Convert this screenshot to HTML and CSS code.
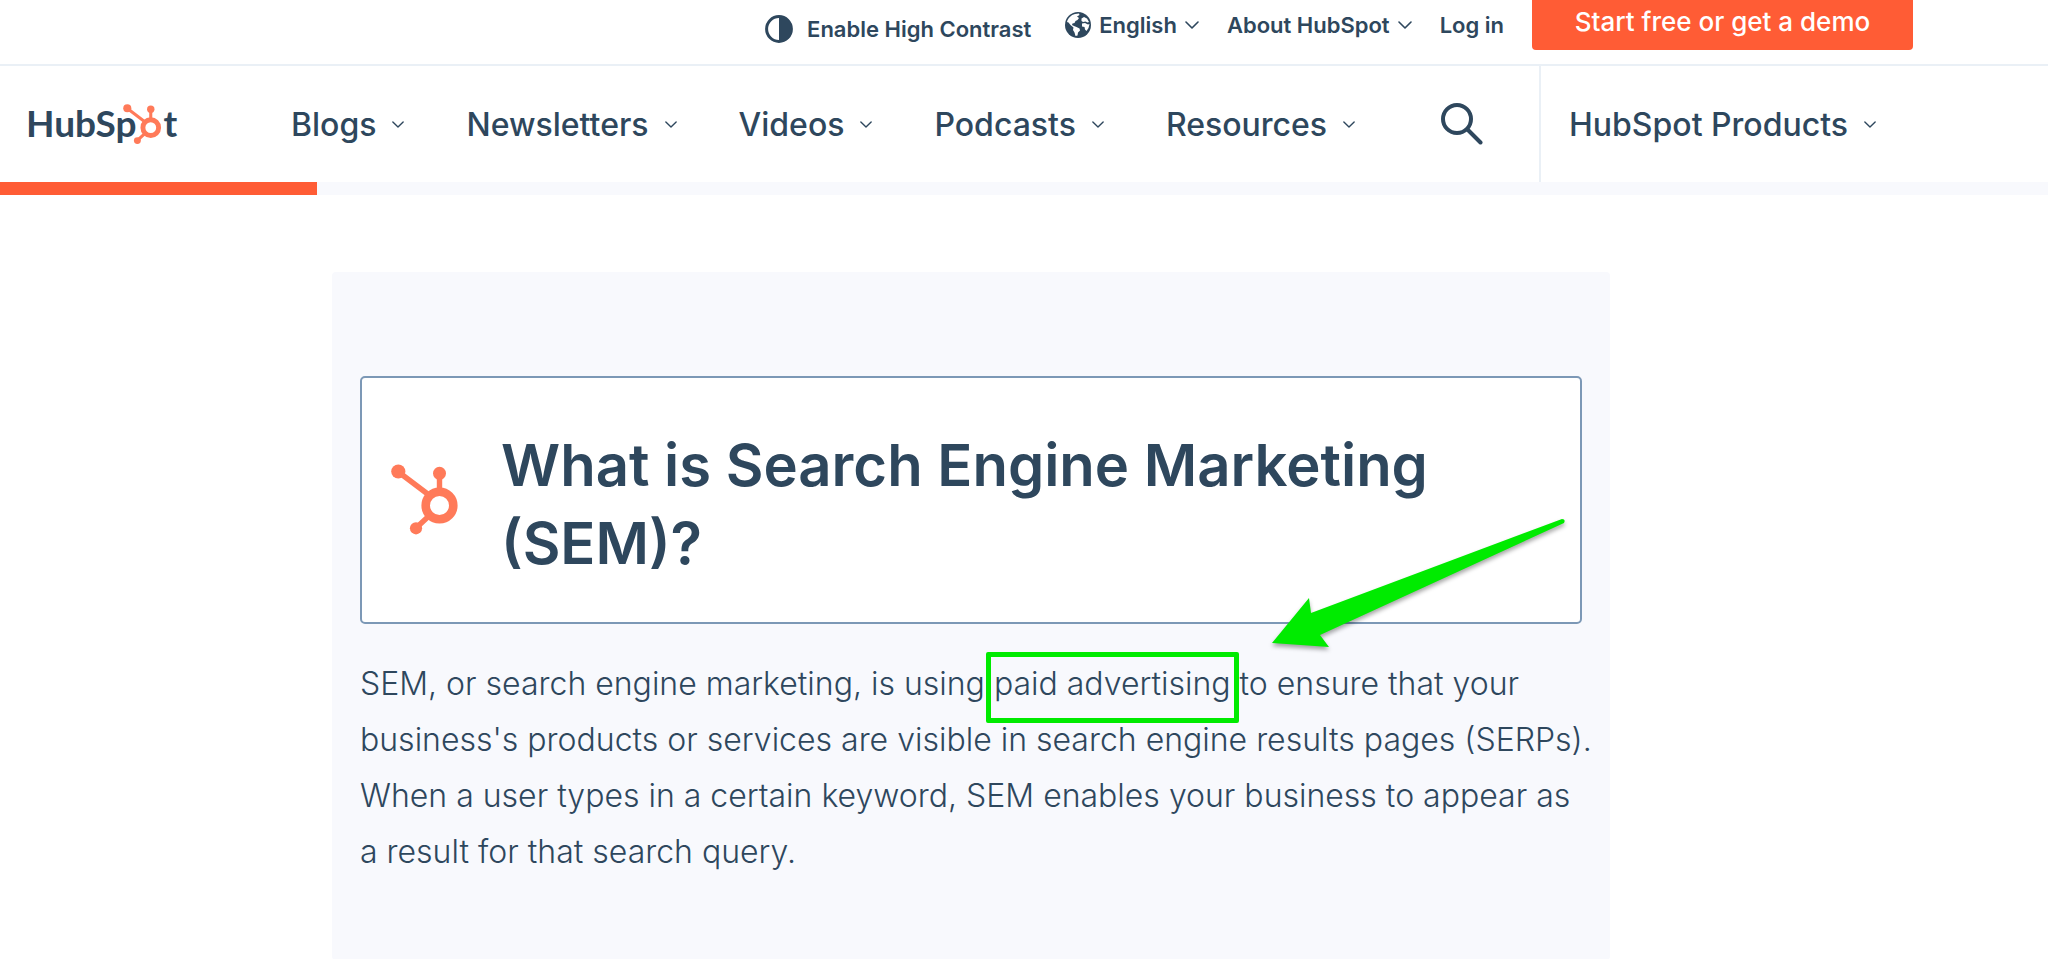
FILE: index.html
```html
<!DOCTYPE html>
<html lang="en">
<head>
<meta charset="utf-8">
<meta name="viewport" content="width=device-width, initial-scale=1">
<title>What is Search Engine Marketing (SEM)?</title>
<link rel="stylesheet" href="styles.css">
</head>
<body>
<svg class="defs" aria-hidden="true">
  <symbol id="sprocket" viewBox="0 0 68 72">
    <g fill="none" stroke="currentColor">
      <circle cx="48.5" cy="41.5" r="13.8" stroke-width="8.6"/>
      <path d="M7.5 8 38 31M48.5 9v20M25 64l14-13" stroke-width="5.4"/>
    </g>
    <g fill="currentColor"><circle cx="7.3" cy="7.5" r="7.1"/><circle cx="48.5" cy="9.3" r="6.5"/><circle cx="25" cy="64.3" r="6.1"/></g>
  </symbol>
  <symbol id="chevron" viewBox="0 0 14 8">
    <path d="M1 1l6 6 6-6" fill="none" stroke="currentColor" stroke-width="1.6" stroke-linecap="round" stroke-linejoin="round"/>
  </symbol>
</svg>

<header class="header">
  <div class="topbar">
    <button class="contrast" type="button">
      <svg class="contrast-icon" viewBox="0 0 28 28" aria-hidden="true"><circle cx="14" cy="14" r="12.4" fill="none" stroke="currentColor" stroke-width="3"/><path d="M14 1a13 13 0 0 1 0 26z" fill="currentColor"/></svg>
      Enable High Contrast
    </button>
    <button class="toplink language" type="button">
      <svg class="globe" viewBox="0 0 26 26" aria-hidden="true"><circle cx="13" cy="13" r="13" fill="currentColor"/><path fill="#fff" d="M2 10C3 6 6 3 10 2L14 1.500 14.500 3 12 4.500 14 6 12.500 8 10.500 9 9.500 11 7.500 11.500 7 13 9 14 11.500 15 14.500 16.500 15 18.500 13 20.500 12.500 23.500 10.500 24 9.500 20.500 8 18 8.500 15.500 5.500 13 3.500 10.500zM16.500 6.500 19 5 22 6.500 24 10 22.500 10.500 20.500 9.500 18 10 16.500 9zM17 11.500 20 11 23 12.500 24.500 12 23.500 16 21.500 19 20 17.500 19.500 15 17 14.500z"/></svg>
      English
      <svg class="chevron" aria-hidden="true"><use href="#chevron"/></svg>
    </button>
    <button class="toplink" type="button">About HubSpot
      <svg class="chevron" aria-hidden="true"><use href="#chevron"/></svg>
    </button>
    <a class="toplink" href="#login">Log in</a>
    <a class="cta" href="#start">Start free or get a demo</a>
  </div>

  <div class="mainbar">
    <a class="logo" href="#home" aria-label="HubSpot"><span>HubSp</span><svg class="logo-mark" aria-hidden="true"><use href="#sprocket"/></svg><span>t</span></a>
    <nav class="nav" aria-label="Main">
      <button class="navlink" type="button">Blogs<svg class="chevron" aria-hidden="true"><use href="#chevron"/></svg></button>
      <button class="navlink" type="button">Newsletters<svg class="chevron" aria-hidden="true"><use href="#chevron"/></svg></button>
      <button class="navlink" type="button">Videos<svg class="chevron" aria-hidden="true"><use href="#chevron"/></svg></button>
      <button class="navlink" type="button">Podcasts<svg class="chevron" aria-hidden="true"><use href="#chevron"/></svg></button>
      <button class="navlink" type="button">Resources<svg class="chevron" aria-hidden="true"><use href="#chevron"/></svg></button>
    </nav>
    <button class="search" type="button" aria-label="Search">
      <svg viewBox="0 0 42 42" aria-hidden="true"><g fill="none" stroke="currentColor" stroke-width="4" stroke-linecap="round"><circle cx="16" cy="16" r="14"/><path d="M26.500 26.500 39.500 39.500"/></g></svg>
    </button>
    <div class="products">
      <button class="navlink" type="button">HubSpot Products<svg class="chevron" aria-hidden="true"><use href="#chevron"/></svg></button>
    </div>
  </div>
  <div class="progress"><div class="progress-fill" style="width:15.5%"></div></div>
</header>

<main class="page">
  <article class="panel">
    <div class="card">
      <svg class="card-mark" aria-hidden="true"><use href="#sprocket"/></svg>
      <h1 class="title">What is Search Engine Marketing (SEM)?</h1>
    </div>
    <p class="answer">SEM, or search engine marketing, is using <mark class="highlight">paid advertising</mark> to ensure that your business's products or services are visible in search engine results pages (SERPs). When a user types in a certain keyword, SEM enables your business to appear as a&nbsp;result for that search query.</p>
    <svg class="arrow" viewBox="0 0 300 134" aria-hidden="true"><path fill="#00eb00" d="M3 126 40 81 42 96L293 2Q297 2 295 6L51 118 60 130z"/></svg>
  </article>
</main>
</body>
</html>
```
FILE: styles.css
```css
:root {
  --ink: #2e475d;
  --orange: #ff5c35;
  --coral: #ff7a59;
  --line: #eaf0f6;
  --wash: #f8f9fd;
  --green: #00eb00;
}

* { box-sizing: border-box; }

body {
  margin: 0;
  background: #fff;
  color: var(--ink);
  font-family: Inter, "Open Sans", sans-serif;
}

button {
  padding: 0;
  border: 0;
  background: none;
  color: inherit;
  font: inherit;
  cursor: pointer;
}

a { color: inherit; text-decoration: none; }

.defs { position: absolute; width: 0; height: 0; }

.chevron { flex: none; width: 14px; height: 8px; }

.topbar {
  display: flex;
  justify-content: flex-end;
  align-items: flex-start;
  height: 66px;
  padding-right: 135px;
  border-bottom: 2px solid var(--line);
  font-size: 22px;
  font-weight: 600;
  line-height: 28px;
  white-space: nowrap;
}

.contrast {
  display: flex;
  align-items: center;
  gap: 14px;
  margin-right: 34px;
  padding-top: 15px;
}

.contrast-icon { width: 28px; height: 28px; }

.toplink {
  display: flex;
  align-items: center;
  gap: 8px;
  margin-right: 28px;
  padding-top: 11px;
}

.globe { width: 26px; height: 26px; }

.cta {
  width: 381px;
  height: 50px;
  padding-top: 8px;
  border-radius: 0 0 4px 4px;
  background: var(--orange);
  color: #fff;
  font-size: 26px;
  font-weight: 500;
  text-align: center;
}

.mainbar {
  display: flex;
  align-items: center;
  height: 116px;
  padding-left: 26px;
  white-space: nowrap;
}

.logo {
  display: flex;
  align-items: center;
  width: 265px;
  padding-bottom: 4px;
  font-family: Lato, sans-serif;
  font-size: 37px;
  font-weight: 700;
}

.logo-mark {
  width: 39px;
  height: 41px;
  margin: 4px 2px 0 -14px;
  color: var(--coral);
}

.nav { display: flex; gap: 62px; }

.navlink {
  display: flex;
  align-items: center;
  gap: 16px;
  font-size: 32px;
  font-weight: 500;
}

.navlink .chevron { width: 12px; height: 7px; }

.search { margin-left: auto; width: 42px; height: 42px; }
.search svg { display: block; width: 100%; height: 100%; }

.products {
  display: flex;
  align-items: center;
  align-self: stretch;
  width: 509px;
  margin-left: 56px;
  padding-left: 28px;
  border-left: 2px solid var(--line);
}

.progress { height: 13px; background: var(--wash); }
.progress-fill { height: 100%; background: var(--orange); }

.page {
  display: grid;
  grid-template-columns: 332fr 1278fr 438fr;
  padding-top: 77px;
}

.panel {
  grid-column: 2;
  position: relative;
  padding: 104px 28px 80px;
  border-radius: 4px;
  background: var(--wash);
}

.card {
  display: flex;
  align-items: center;
  gap: 42px;
  padding: 40px 29px;
  border: 2px solid #7c98b6;
  border-radius: 5px;
  background: #fff;
}

.card-mark { flex: none; width: 68px; height: 72px; color: var(--coral); }

.title {
  margin: 0;
  padding-top: 8px;
  font-size: 58px;
  font-weight: 600;
  line-height: 78px;
}

.answer {
  margin: 32px -16px 0 0;
  font-size: 32px;
  font-weight: 300;
  line-height: 56px;
}

.highlight {
  position: relative;
  background: none;
  color: inherit;
}

.highlight::after {
  content: "";
  position: absolute;
  inset: -12px -8px -20px;
  border: 5px solid var(--green);
  border-radius: 2px;
}

.arrow {
  position: absolute;
  top: 245px;
  right: 41px;
  width: 300px;
  height: 134px;
  filter: drop-shadow(0 3px 2px rgb(0 0 0 / 35%));
}
```
